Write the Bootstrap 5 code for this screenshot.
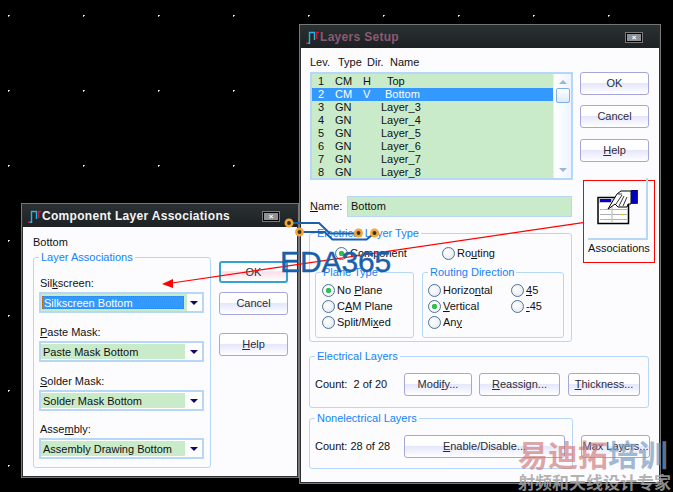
<!DOCTYPE html>
<html lang="en"><head><meta charset="utf-8"><title>Layers Setup</title>
<link href="https://cdn.jsdelivr.net/npm/bootstrap@5.3.0/dist/css/bootstrap.min.css" rel="stylesheet">
<style>
html,body{margin:0;height:100%;overflow:hidden}
body{width:673px;height:492px;background-color:#000;background-image:radial-gradient(circle at .75px .75px,#fff .7px,transparent 1px);background-size:75px 75px;background-position:8px 15px;font:11px/13px "Liberation Sans",Arial,sans-serif;color:#111;position:relative}
.dwin{position:absolute;background:#252a2d;border:2px solid #2a2e31;outline:1px solid #777;outline-offset:-1px;display:flex;flex-direction:column}
.win-a{left:299px;top:24px;width:362px;height:460px}
.win-b{left:21px;top:203px;width:278px;height:275px}
.ttl{height:22px;flex:none;display:flex;align-items:center;font-weight:700;background:linear-gradient(#2a3033,#1d2123);font-size:12px;letter-spacing:.3px}
.ttl svg{flex:none;margin-right:1px}
.ttl-a{color:#8b5a72;padding-left:5px}
.ttl-b{color:#f4f4f4;padding-left:5px}
.xbtn{margin-left:auto;width:16px;height:9px;border:1px solid #000;outline:1px solid #777;background:#8d9194;color:#fff;font:700 8px/7px "Liberation Sans",sans-serif;letter-spacing:0;text-align:center}
.ttl-a .xbtn{margin-right:17px}
.ttl-b .xbtn{margin-right:18px}
.cli{flex:1;background:#fcfcff;min-height:0}
.cli-a{padding:8px 0 0 8px}
.cli-b{padding:8px 0 0 10px}
.hdr{display:flex;height:16px;margin-left:1px}
.hdr span:nth-child(1){width:28px}.hdr span:nth-child(2){width:29px}.hdr span:nth-child(3){width:23px}
.lbox{width:263px;height:108px;margin-left:1px;border:2px solid #b7d7f7;background:#c9ebc9;display:flex}
.rows{flex:1;padding-top:1px}
.lrow{display:flex;height:13px;padding-left:6px}
.lrow.on{background:#3399ff;color:#fff}
.lrow span:nth-child(1){width:17px}.lrow span:nth-child(2){width:28px}.lrow span:nth-child(3){width:18px}
.lrow span:nth-child(4).p6{padding-left:6px}.lrow span:nth-child(4).p4{padding-left:4px}
.sbar{width:18px;background:linear-gradient(90deg,#fff,#eef4ff);border-left:1px solid #e6eefa;position:relative;display:flex;flex-direction:column;align-items:center}
.tri-u,.tri-d{width:0;height:0;border-left:4px solid transparent;border-right:4px solid transparent}
.tri-u{border-bottom:4px solid #9db5cf;margin-top:6px}
.tri-d{border-top:4px solid #9db5cf;margin-top:auto;margin-bottom:6px}
.thumb{width:14px;height:15px;margin-top:4px;border:1px solid #7fb0ea;border-radius:2px;background:linear-gradient(#fff,#dce9fb)}
.ubtn{display:block;flex:none;width:69px;height:23px;padding:0;border:1px solid #a6a6d8;border-radius:3px;color:#2b2b3a;font:11px/19px "Liberation Sans",Arial,sans-serif;background:linear-gradient(#fff 0,#fff 45%,#e4e6fb 48%,#fff 100%);text-align:center}
.ubtn.dflt{border:2px solid #35a3cf;height:22px;line-height:17px;background:linear-gradient(#fff 0,#fff 45%,#fadde6 48%,#fff 100%)}
.tc{display:flex;gap:7px}
.colr{width:75px;padding-top:16px}
.colr .ubtn+.ubtn{margin-top:10px}
.colr .ubtn.h{margin-top:11px}
.assoc{width:72px;height:83px;margin:18px 0 0 3px;border:1px solid #f00;background:#fcfcff;position:relative;text-align:center;padding-top:61px}
.assoc::before{content:"";position:absolute;left:4px;top:-3px;width:60px;height:62px;border-right:2px solid #b7d7f7;border-bottom:2px solid #b7d7f7}
.assoc svg{position:absolute;left:13px;top:9px}
.assoc span{position:relative;color:#111}
.nm{display:flex;align-items:center;margin:16px 0 0 1px;width:262px}
.nm label{width:37px}
.nm .ifld{width:225px;height:21px;border:1px solid #b7d7f7;background:#c9ebc9;padding-left:3px;line-height:19px}
fieldset.gb{border:1px solid #b7d7f7;border-radius:3px;padding:0;min-width:0}
fieldset.gb>legend{float:none;width:auto;margin:0 0 0 5px;padding:0 2px;font-size:11px;line-height:13px;color:#1482f8}
fieldset.g1{width:263px;height:115px;margin:10px 0 0 0}
.rrow{display:flex;align-items:center;height:16px}
.rd{display:inline-block;flex:none;width:13px;height:13px;border-radius:50%;border:1px solid #4a7398;background:radial-gradient(circle at 40% 40%,#fff,#dfe4ea);margin-right:2px}
.rd.on{background:radial-gradient(circle,#2fc24a 0 2.5px,#fff 3px,#e6e9ee 100%)}
.top2{display:flex;padding:5px 0 0 25px;height:21px}
.top2 .w1{width:107px}
.sub{display:flex;gap:8px;padding:0 0 0 5px;margin-top:5px}
fieldset.g2{height:72px}
fieldset.g2a{width:99px}fieldset.g2b{width:142px}
.gin{padding:3px 0 0 6px}
.gin2{display:flex;padding:3px 0 0 5px}
.gin2>div:first-child{width:83px}
fieldset.g3{margin:8px 0 0 0;width:340px;height:58px}
fieldset.g4{width:264px;height:57px}
.cnt{display:flex;align-items:center;padding:10px 0 0 5px}
.cnt>span{width:89px}
.m1{width:68px}.m2{width:81px;margin-left:7px}.m3{width:72px;margin-left:8px}.m4{width:161px}
.low{display:flex;margin-top:4px}
.m5{margin:23px 0 0 8px}
.cb-l{height:15px;line-height:15px}
fieldset.g5{width:178px;height:217px;margin:1px 0 0 0}
.g5 .lab{display:block;margin:12px 0 0 6px;height:16px;line-height:14px}
.g5 .lab.last{margin-top:11px}
.cmb{width:165px;height:21px;margin:0 0 0 5px;border:2px solid #b7d7f7;background:#fff;display:flex;align-items:stretch;padding:1px 0}
.cmb .val{width:144px;background:#c9ebc9;padding-left:2px;line-height:17px}
.cmb .ar{flex:1;display:flex;align-items:center;justify-content:center}
.cmb .ar i{display:block;width:0;height:0;border-left:4px solid transparent;border-right:4px solid transparent;border-top:4px solid #0b0b66}
.cmb .val.sel{background:#3399ff;color:#fff;outline:1px dotted #b5651d;outline-offset:-1px;margin:1px;width:142px;line-height:15px}
.cmb.sl{background:linear-gradient(90deg,#c9ebc9 146px,#fff 146px)}
.bbody{display:flex;gap:8px}
.bcol{padding-top:11px}
.bcol .ubtn{margin-top:9px}.bcol .ubtn:first-child{margin-top:0}.bcol .ubtn.h{margin-top:18px}
.over{position:absolute;left:0;top:0;pointer-events:none}
.eda{position:absolute;left:280px;top:247px;font:400 30px/30px "Liberation Sans",Arial,sans-serif;color:#1860aa;letter-spacing:-.1px;-webkit-text-stroke:.4px #1860aa}
.wm1{position:absolute;left:518px;top:436px;font:700 30px/34px "Noto Sans CJK SC",sans-serif;color:rgba(205,120,120,.68);white-space:nowrap}
.wm1 b{color:rgba(125,160,195,.72);font-weight:700}
.wm2{position:absolute;left:518px;top:472px;font:700 17px/20px "Noto Sans CJK SC",sans-serif;color:rgba(165,165,165,.85);white-space:nowrap}
</style></head><body>

<div class="dwin win-a">
 <div class="ttl ttl-a">
  <svg width="13" height="13" viewBox="0 0 13 13" fill="none"><path d="M1.500 12.300H3.500V1.500H8.500V9" stroke="#29b4e8" stroke-width="1.400"/><path d="M0 12.300H2M10.700 8V1.500H13" stroke="#d01828" stroke-width="1.400"/></svg>
  <span>Layers Setup</span><span class="xbtn">×</span>
 </div>
 <div class="cli cli-a">
  <div class="tc">
   <div>
    <div class="hdr"><span>Lev.</span><span>Type</span><span>Dir.</span><span>Name</span></div>
    <div class="lbox">
     <div class="rows">
      <div class="lrow"><span>1</span><span>CM</span><span>H</span><span class="p6">Top</span></div>
      <div class="lrow on"><span>2</span><span>CM</span><span>V</span><span class="p4">Bottom</span></div>
      <div class="lrow"><span>3</span><span>GN</span><span></span><span>Layer_3</span></div>
      <div class="lrow"><span>4</span><span>GN</span><span></span><span>Layer_4</span></div>
      <div class="lrow"><span>5</span><span>GN</span><span></span><span>Layer_5</span></div>
      <div class="lrow"><span>6</span><span>GN</span><span></span><span>Layer_6</span></div>
      <div class="lrow"><span>7</span><span>GN</span><span></span><span>Layer_7</span></div>
      <div class="lrow"><span>8</span><span>GN</span><span></span><span>Layer_8</span></div>
     </div>
     <div class="sbar"><i class="tri-u"></i><i class="thumb"></i><i class="tri-d"></i></div>
    </div>
    <div class="nm"><label><u>N</u>ame:</label><div class="ifld">Bottom</div></div>
    <fieldset class="gb g1"><legend>Electrical Layer Type</legend>
     <div class="top2">
      <div class="rrow w1"><i class="rd on"></i><span>Component</span></div>
      <div class="rrow"><i class="rd"></i><span>Ro<u>u</u>ting</span></div>
     </div>
     <div class="sub">
      <fieldset class="gb g2 g2a"><legend>Plane Type</legend>
       <div class="gin">
        <div class="rrow"><i class="rd on"></i><span>No <u>P</u>lane</span></div>
        <div class="rrow"><i class="rd"></i><span>C<u>A</u>M Plane</span></div>
        <div class="rrow"><i class="rd"></i><span>Split/Mi<u>x</u>ed</span></div>
       </div>
      </fieldset>
      <fieldset class="gb g2 g2b"><legend>Routing Direction</legend>
       <div class="gin2">
        <div>
         <div class="rrow"><i class="rd"></i><span>Horizo<u>n</u>tal</span></div>
         <div class="rrow"><i class="rd on"></i><span><u>V</u>ertical</span></div>
         <div class="rrow"><i class="rd"></i><span>An<u>y</u></span></div>
        </div>
        <div>
         <div class="rrow"><i class="rd"></i><span><u>4</u>5</span></div>
         <div class="rrow"><i class="rd"></i><span><u>-</u>45</span></div>
        </div>
       </div>
      </fieldset>
     </div>
    </fieldset>
   </div>
   <div class="colr">
    <button class="ubtn" type="button">OK</button>
    <button class="ubtn" type="button">Cancel</button>
    <button class="ubtn h" type="button"><u>H</u>elp</button>
    <div class="assoc">
     <svg width="42" height="36" viewBox="0 0 42 36">
      <rect x="1" y="7.500" width="30.500" height="26" fill="#fff" stroke="#000" stroke-width="1.500"/>
      <rect x="2" y="9" width="29" height="4" fill="#c4c4c4"/><rect x="3" y="9" width="11" height="3" fill="#0000d0"/>
      <path d="M3 19.500h27M3 24.500h27M3 29.500h27M15 15v17" stroke="#b0b0b0"/>
      <path d="M5 19.500h1M14 19.500h1M25 19.500h1M14 24.500h1M25 24.500h1M5 29.500h1M14 29.500h1M25 29.500h1" stroke="#e8e800"/>
      <path d="M11 19L20 4l4-3h10v13h-3l-1 3h-9l-3-3-4 3z" fill="#fff" stroke="#000"/>
      <path d="M19 14l6-9M22 16l5-10M26 16l4-9M21 4h4" stroke="#000" stroke-width=".8" fill="none"/>
      <rect x="34.500" y="0" width="6" height="13.500" fill="#0000c0" stroke="#000" stroke-width=".7"/>
     </svg>
     <span>Associations</span>
    </div>
   </div>
  </div>
  <fieldset class="gb g3"><legend>Electrical Layers</legend>
   <div class="cnt"><span>Count:&nbsp; 2 of 20</span>
    <button class="ubtn m1" type="button">Modi<u>f</u>y...</button>
    <button class="ubtn m2" type="button"><u>R</u>eassign...</button>
    <button class="ubtn m3" type="button"><u>T</u>hickness...</button>
   </div>
  </fieldset>
  <div class="low">
   <fieldset class="gb g4"><legend>Nonelectrical Layers</legend>
    <div class="cnt"><span>Count: 28 of 28</span>
     <button class="ubtn m4" type="button"><u>E</u>nable/Disable...</button>
    </div>
   </fieldset>
   <button class="ubtn m5" type="button">Max Layers...</button>
  </div>
 </div>
</div>

<div class="dwin win-b">
 <div class="ttl ttl-b">
  <svg width="13" height="13" viewBox="0 0 13 13" fill="none"><path d="M1.500 12.300H3.500V1.500H8.500V9" stroke="#29b4e8" stroke-width="1.400"/><path d="M0 12.300H2M10.700 8V1.500H13" stroke="#d01828" stroke-width="1.400"/></svg>
  <span>Component Layer Associations</span><span class="xbtn">×</span>
 </div>
 <div class="cli cli-b">
  <div class="cb-l">Bottom</div>
  <div class="bbody">
   <fieldset class="gb g5"><legend>Layer Associations</legend>
    <span class="lab">Sil<u>k</u>screen:</span>
    <div class="cmb sl"><div class="val sel">Silkscreen Bottom</div><div class="ar"><i></i></div></div>
    <span class="lab"><u>P</u>aste Mask:</span>
    <div class="cmb"><div class="val">Paste Mask Bottom</div><div class="ar"><i></i></div></div>
    <span class="lab"><u>S</u>older Mask:</span>
    <div class="cmb"><div class="val">Solder Mask Bottom</div><div class="ar"><i></i></div></div>
    <span class="lab last">Asse<u>m</u>bly:</span>
    <div class="cmb"><div class="val">Assembly Drawing Bottom</div><div class="ar"><i></i></div></div>
   </fieldset>
   <div class="bcol">
    <button class="ubtn dflt" type="button">OK</button>
    <button class="ubtn" type="button">Cancel</button>
    <button class="ubtn h" type="button"><u>H</u>elp</button>
   </div>
  </div>
 </div>
</div>

<svg class="over" width="673" height="492" viewBox="0 0 673 492" fill="none">
 <path d="M583 222.600L172 283" stroke="#f00" stroke-width="1.200"/>
 <path d="M162 284l11-5v9z" fill="#f00"/>
 <path d="M289 223h30l11 10.500h28M299.500 232h25l8 7.500h34l8-6.500" stroke="#1860aa" stroke-width="2"/>
 <g stroke="#f2a63a" stroke-width="2.500" fill="#3c3020"><circle cx="289" cy="223" r="3.200"/><circle cx="299.500" cy="232" r="3.200"/><circle cx="358.500" cy="233" r="3.200"/><circle cx="374.500" cy="233" r="3.200"/></g>
</svg>
<div class="eda">EDA365</div>
<div class="wm1">易迪拓<b>培训</b></div>
<div class="wm2">射频和天线设计专家</div>
<script src="https://cdn.jsdelivr.net/npm/bootstrap@5.3.0/dist/js/bootstrap.bundle.min.js"></script>
</body></html>
